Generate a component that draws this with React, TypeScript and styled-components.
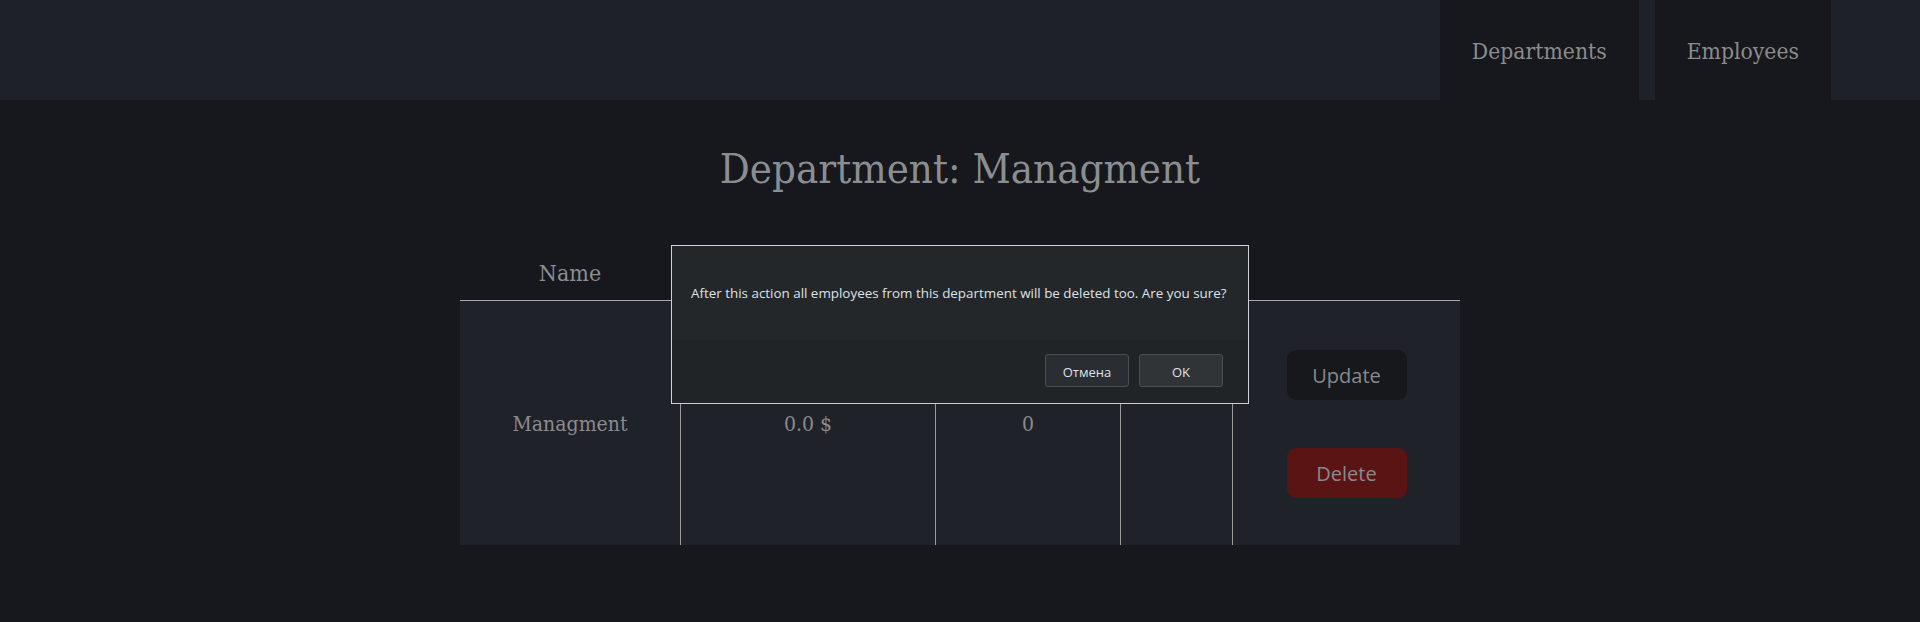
import React from "react";
import styled, { createGlobalStyle } from "styled-components";

const Global = createGlobalStyle`
  html, body { margin: 0; padding: 0; }
  body {
    background: #16181d;
    font-family: "DejaVu Serif Condensed", "DejaVu Serif", "Liberation Serif", serif;
    color: #8a8b8d;
  }
`;

const Page = styled.div`
  position: relative;
  min-height: 622px;
  background: #16181d;
`;

const Header = styled.header`
  height: 100px;
  background: #1f2129;
  display: flex;
  justify-content: flex-end;
  align-items: stretch;
  gap: 16px;
  padding-right: 89px;
`;

const NavTab = styled.a`
  display: flex;
  align-items: center;
  justify-content: center;
  padding: 1px 32px 0;
  background: #16181d;
  color: #8b8b8b;
  font-size: 22.7px;
  text-decoration: none;
  cursor: pointer;
`;

const Title = styled.h1`
  margin: 45px 0 0;
  text-align: center;
  font-weight: normal;
  font-size: 41.6px;
  line-height: 48px;
  color: #8b8e91;
`;

const Table = styled.div`
  width: 1000px;
  margin: 54px auto 0;
  display: grid;
  grid-template-columns: 220px 255px 185px 112px 228px;
`;

const HeadCell = styled.div`
  height: 54px;
  padding-bottom: 1px;
  box-sizing: border-box;
  display: flex;
  align-items: center;
  justify-content: center;
  font-size: 23px;
  color: #8a8d91;
  border-bottom: 1px solid #a9a9a9;
`;

const Cell = styled.div<{ $divider?: boolean }>`
  height: 244px;
  padding-top: 2px;
  box-sizing: border-box;
  background: #20222a;
  display: flex;
  flex-direction: column;
  align-items: center;
  justify-content: center;
  gap: 48px;
  font-size: 21px;
  color: #8a8b8d;
  border-left: ${(p) => (p.$divider ? "1px solid #9a9a9a" : "none")};
`;

const ActionButton = styled.button<{ $danger?: boolean }>`
  width: 120px;
  height: 50px;
  border: none;
  border-radius: 9px;
  background: ${(p) => (p.$danger ? "#5b1414" : "#16181c")};
  color: #878a8e;
  font-family: "Open Sans", "Noto Sans", sans-serif;
  font-size: 20px;
  cursor: pointer;
`;

const Dialog = styled.div`
  position: absolute;
  top: 245px;
  left: 50%;
  transform: translateX(-50%);
  width: 576px;
  border: 1px solid #cfd1d4;
  background: #212427;
  font-family: "Open Sans", "Noto Sans", sans-serif;
  color: #dde2e8;
`;

const DialogBody = styled.div`
  height: 94px;
  box-sizing: border-box;
  background: #24272a;
  display: flex;
  align-items: center;
  padding: 0 19px;
  font-size: 13.4px;
`;

const DialogFooter = styled.div`
  height: 63px;
  box-sizing: border-box;
  display: flex;
  justify-content: flex-end;
  align-items: flex-start;
  gap: 10px;
  padding: 14px 25px 0;
`;

const DialogButton = styled.button<{ $primary?: boolean }>`
  width: 84px;
  height: 33px;
  padding: 3px 0 0;
  border: 1px solid #4b4e52;
  border-radius: 3px;
  background: ${(p) => (p.$primary ? "#303437" : "#2a2d31")};
  color: #dfe3e8;
  font-family: "Open Sans", "Noto Sans", sans-serif;
  font-size: 13px;
  cursor: pointer;
`;

export default function App() {
  return (
    <Page>
      <Global />
      <Header>
        <NavTab>Departments</NavTab>
        <NavTab>Employees</NavTab>
      </Header>
      <Title>Department: Managment</Title>
      <Table>
        <HeadCell>Name</HeadCell>
        <HeadCell />
        <HeadCell />
        <HeadCell />
        <HeadCell />
        <Cell>Managment</Cell>
        <Cell $divider>0.0 $</Cell>
        <Cell $divider>0</Cell>
        <Cell $divider />
        <Cell $divider>
          <ActionButton>Update</ActionButton>
          <ActionButton $danger>Delete</ActionButton>
        </Cell>
      </Table>
      <Dialog>
        <DialogBody>
          After this action all employees from this department will be deleted too. Are you sure?
        </DialogBody>
        <DialogFooter>
          <DialogButton>Отмена</DialogButton>
          <DialogButton $primary>OK</DialogButton>
        </DialogFooter>
      </Dialog>
    </Page>
  );
}
